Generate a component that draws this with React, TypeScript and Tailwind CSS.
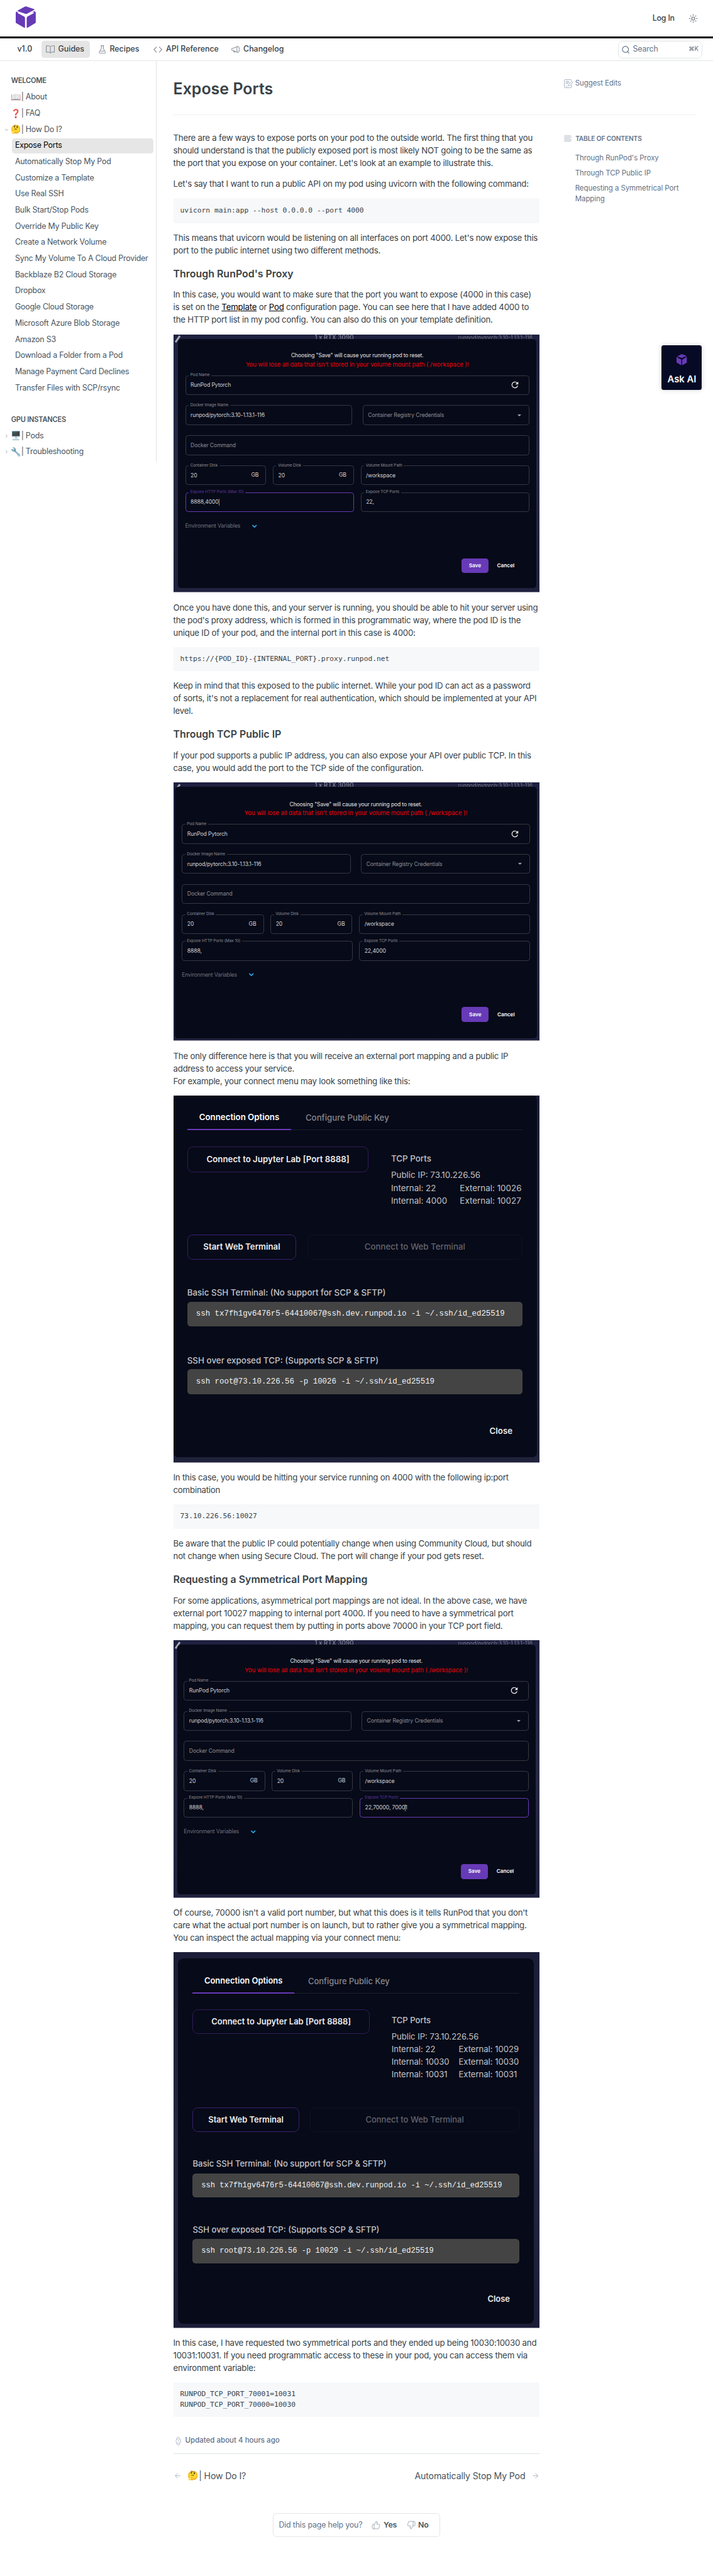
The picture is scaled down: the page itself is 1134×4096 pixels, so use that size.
import React from "react";
import { ArrowLeft, ArrowRight, ChevronDown, ChevronRight, Sun, ThumbsUp, ThumbsDown, Watch } from "lucide-react";

function Cube({ className }: { className: string }) {
  return (
    <svg className={className} viewBox="0 0 36 39" fill="currentColor">
      <path d="M17 .4c.8-.3 1.400-.3 2 0L33 5.200c1 .4 1 .9.2 1.300L21 12.900c-1.700.9-3.400.9-5.200 0L4 8.900c-1-.5-1-1 0-1.600Z" />
      <path d="M4 11c-.8-.4-.9.900 0 1.500l10.500 5.700c1.600.9 2.200 1.800 2.200 3.600V37.500c0 1.200-.6 1.500-1.600 1L1.400 30.500C.4 30 0 29.400 0 28.200V12c0-1.400 1.400-2.600 2.600-2.200Z" />
      <path d="M32.500 9.200c1.900-.600 3.500.500 3.500 2.500v16.500c0 1.200-.4 1.800-1.400 2.400l-13.200 7.800c-1 .6-1.700.3-1.700-.9V21.800c0-1.800.7-2.700 2.200-3.600l10.600-6c.9-.6.6-1.600-.4-1.400l-1.400.2c-.9-.1-.7-.7 0-1Z" />
    </svg>
  );
}

function BookIcon() {
  return (
    <svg className="h-[15px] w-[16px]" viewBox="0 0 16 15" fill="none" stroke="#7b838c" strokeWidth="1.100">
      <path d="M8 2.600C7 1.300 5.500 1 4 1H.700v11.300H5c1.600 0 2.500.6 3 1.700.5-1.100 1.400-1.700 3-1.700h4.300V1H12c-1.500 0-3 .3-4 1.600ZM8 2.600V14" />
    </svg>
  );
}
function FlaskIcon() {
  return (
    <svg className="h-[15px] w-[13px]" viewBox="0 0 13 15" fill="none" stroke="#7b838c" strokeWidth="1.100" strokeLinejoin="round">
      <path d="M3.500.700h6M4.700.700v5L.800 12.600c-.4.900 0 1.700 1 1.700h9.400c1 0 1.400-.8 1-1.700L8.300 5.700v-5M3 10.500h7" />
    </svg>
  );
}
function CodeIcon() {
  return (
    <svg className="h-[11px] w-[16px]" viewBox="0 0 16 11" fill="none" stroke="#7b838c" strokeWidth="1.200" strokeLinecap="round" strokeLinejoin="round">
      <path d="M5.300 1 1 5.500 5.300 10M10.700 1 15 5.500 10.700 10" />
    </svg>
  );
}
function MegaphoneIcon() {
  return (
    <svg className="h-[13px] w-[15px]" viewBox="0 0 15 13" fill="none" stroke="#7b838c" strokeWidth="1.100" strokeLinejoin="round">
      <path d="M11.500.800 3 4.300H1.600C1 4.300.7 4.600.7 5.200v2c0 .6.3.900.9.900H3l8.500 3.600M3.700 8.300l.8 2.700h2.200l-.5-1.700" />
      <ellipse cx="12" cy="6.200" rx="2.200" ry="5.500" />
    </svg>
  );
}
function NoteIcon() {
  return (
    <svg className="h-[16px] w-[17px]" viewBox="0 0 17 16" fill="none" stroke="#a9b3c0" strokeWidth="1.100" strokeLinejoin="round">
      <path d="M13.500 3V2c0-.8-.5-1.300-1.300-1.300H2C1.200.700.700 1.200.700 2v12c0 .8.5 1.300 1.300 1.300h10.200c.8 0 1.300-.5 1.300-1.300V9.500M3.200 3.700H9M3.200 5.700h6.500M3.200 7.700h4.500M3.200 12.700h3M8 9.500l6-5.500 1.800 1.600-5.500 5.800-2.700.6Z" />
    </svg>
  );
}
function ListIcon() {
  return (
    <svg className="h-[12px] w-[14px]" viewBox="0 0 14 12" fill="none" stroke="#a9b3c0" strokeWidth="1">
      <path d="M.5 1h12M0 3.500h14M.5 6h11M0 8.500h14M.5 11h12.500" />
    </svg>
  );
}

const guides = [
  "Automatically Stop My Pod",
  "Customize a Template",
  "Use Real SSH",
  "Bulk Start/Stop Pods",
  "Override My Public Key",
  "Create a Network Volume",
  "Sync My Volume To A Cloud Provider",
  "Backblaze B2 Cloud Storage",
  "Dropbox",
  "Google Cloud Storage",
  "Microsoft Azure Blob Storage",
  "Amazon S3",
  "Download a Folder from a Pod",
  "Manage Payment Card Declines",
  "Transfer Files with SCP/rsync",
];

function Category({ emoji, label, chevron }: { emoji: string; label: string; chevron?: "down" | "right" }) {
  return (
    <div className="flex h-[29px] items-center whitespace-nowrap">
      <span className="flex w-[20px] justify-end pr-[3px] text-[#8a94a0]">
        {chevron === "down" && <ChevronDown size={10} strokeWidth={2} />}
        {chevron === "right" && <ChevronRight size={10} strokeWidth={2} />}
      </span>
      <span className="flex w-[18px] justify-center text-[15px] leading-none">{emoji}</span>
      <span>| {label}</span>
    </div>
  );
}

function Sidebar() {
  return (
    <aside className="h-[719px] w-[281px] shrink-0 border-r border-[#e3e5e7] pt-[20.500px] text-[14px] tracking-[-0.230px] text-[#4a5560]">
      <h2 className="flex h-[29px] items-center pl-[20px] text-[12.500px] font-semibold">WELCOME</h2>
      <div className="pt-[0.500px]">
        <Category emoji="📖" label="About" />
        <Category emoji="❓" label="FAQ" />
        <Category emoji="🤔" label="How Do I?" chevron="down" />
      </div>
      <a className="mx-[5px] mt-[1px] mb-[1px] ml-[22px] flex h-[27px] items-center rounded-[5px] bg-[#e6e6e6] pl-[5px] text-black">Expose Ports</a>
      {guides.map((g) => (
        <a key={g} className="flex h-[29px] items-center pl-[27px] whitespace-nowrap">{g}</a>
      ))}
      <h2 className="mt-[28px] flex h-[29px] items-center pl-[20px] text-[12.500px] font-semibold">GPU INSTANCES</h2>
      <Category emoji="🖥️" label="Pods" chevron="right" />
      <Category emoji="🔧" label="Troubleshooting" chevron="right" />
    </aside>
  );
}

function P({ className, children }: { className: string; children: React.ReactNode }) {
  return <p className={"text-[15px] leading-[22.5px] tracking-[-0.250px] whitespace-nowrap " + className}>{children}</p>;
}
function H3({ className, children }: { className: string; children: React.ReactNode }) {
  return <h3 className={"h-[24px] text-[18px] leading-[24px] font-semibold " + className}>{children}</h3>;
}
function Code({ className, lines }: { className: string; lines: string[] }) {
  return (
    <pre className={"flex flex-col justify-center rounded-[3px] bg-[#f6f8fa] pl-[12.500px] text-[12.75px] leading-[19.1px] " + className}>
      {lines.map((l) => (
        <code key={l} className="font-['DejaVu_Sans_Mono',monospace]">{l}</code>
      ))}
    </pre>
  );
}

type FieldProps = { label?: string; value: string; suffix?: React.ReactNode; focus?: boolean; muted?: boolean; caret?: boolean; tail?: string; className?: string };
function Field({ label, value, suffix, focus, muted, caret, tail, className = "flex-1" }: FieldProps) {
  return (
    <div
      className={
        "relative flex h-[35.500px] items-center justify-between rounded-[5px] border px-[8.500px] text-[9.800px] tracking-[-0.150px] " +
        (focus ? "border-[#673ab7] " : "border-[#363843] ") +
        (muted ? "text-[#8b8c93] " : "text-[#cfd0d4] ") +
        className
      }
    >
      {label && (
        <span className={"absolute -top-[5px] left-[5px] bg-[#070a18] px-[3px] text-[7.300px] leading-[9px] tracking-[-0.100px] " + (focus ? "text-[#5b34a3]" : "text-[#8b8c93]")}>
          {label}
        </span>
      )}
      <span className="flex items-center pt-[1px] whitespace-pre">
        {value}
        {caret && <span className="-mr-px h-[12px] w-px bg-[#8f9096]" />}
        {tail}
      </span>
      {suffix}
    </div>
  );
}

type PodFormProps = { frame: string; panel: string; half: string; disk: string; http: string; tcp: string; focus: "http" | "tcp" | "none"; tcpTail?: string };
function PodForm({ frame, panel, half, disk, http, tcp, focus, tcpTail }: PodFormProps) {
  return (
    <div className={"relative w-[658px] overflow-hidden border-b border-[#8f90a0] bg-linear-to-b from-[#1e2040] via-[#272944] to-[#1f213d] font-[Inter,sans-serif] " + frame}>
      <div className="absolute top-0 left-0 h-[14px] w-full text-[#77788a] blur-[0.800px]">
        <span className="absolute top-[2px] left-[6px] h-[14px] w-[3px] rotate-35 bg-[#a9aab4]" />
        <span className="absolute top-[-1px] left-[254px] text-[11px] leading-[13px] font-semibold">1 x RTX 3090</span>
        <span className="absolute top-0 right-[13px] text-[9.500px] leading-[12px]">runpod/pytorch:3.10-1.13.1-116</span>
      </div>
      <div className={"relative rounded-[6px] bg-[#070a18] " + panel}>
        <div className="flex flex-col items-center whitespace-nowrap">
          <span className="text-[9.700px] leading-[15px] tracking-[-0.170px] text-[#e2e3e6]">Choosing "Save" will cause your running pod to reset.</span>
          <span className="text-[10.800px] leading-[15.500px] tracking-[-0.040px] text-[#f20008]">You will lose all data that isn't stored in your volume mount path ( /workspace )!</span>
        </div>
        <div className="mt-[11.500px] flex flex-col gap-[18.500px]">
          <Field
            className="w-full"
            label="Pod Name"
            value="RunPod Pytorch"
            suffix={
              <svg className="mr-[8px] h-[18px] w-[18px]" viewBox="0 0 24 24" fill="#e8e8ea">
                <path d="M17.650 6.350A7.960 7.960 0 0 0 12 4a8 8 0 1 0 7.730 10h-2.080A6 6 0 1 1 12 6c1.660 0 3.140.69 4.220 1.780L13 11h7V4z" />
              </svg>
            }
          />
          <div className="flex justify-between">
            <Field className={half} label="Docker Image Name" value="runpod/pytorch:3.10-1.13.1-116" />
            <Field
              className={half}
              muted
              value="Container Registry Credentials"
              suffix={<span className="mr-[5px] h-0 w-0 border-x-[3.500px] border-t-[4px] border-x-transparent border-t-[#a5a6ac]" />}
            />
          </div>
          <Field className="w-full" muted value="Docker Command" />
          <div className="flex gap-[12px]">
            <Field className={disk} label="Container Disk" value="20" suffix={<span className="mr-[4px]">GB</span>} />
            <Field className={disk} label="Volume Disk" value="20" suffix={<span className="mr-[4px]">GB</span>} />
            <Field label="Volume Mount Path" value="/workspace" />
          </div>
        </div>
        <div className="mt-[12.500px] flex gap-[12px]">
          <Field label="Expose HTTP Ports (Max 10)" value={http} focus={focus === "http"} caret={focus === "http"} />
          <Field label="Expose TCP Ports" value={tcp} focus={focus === "tcp"} caret={focus === "tcp"} tail={tcpTail} />
        </div>
        <div className="mt-[18px] flex h-[15px] items-center gap-[19px] text-[9.800px] tracking-[-0.210px] text-[#6d6f7a]">
          Environment Variables
          <ChevronDown size={13} strokeWidth={3.500} className="text-[#29a8e8]" />
        </div>
        <div className="mt-[50px] flex items-center justify-end pr-[27px] text-[9.300px] font-semibold text-white">
          <button className="h-[27px] w-[48.500px] rounded-[5px] bg-[#673ab7]">Save</button>
          <span className="ml-[15.500px]">Cancel</span>
        </div>
      </div>
    </div>
  );
}

function ConnectPanel({ panel, ports, sshPort }: { panel: string; ports: [string, string][]; sshPort: string }) {
  return (
    <div className={"bg-[#070a18] text-[15.150px] whitespace-nowrap text-[#c3c4c9] " + panel}>
      <div className="flex h-[63px] w-[601.500px] border-b border-[#1d202d] pt-[20px] font-medium">
        <div className="flex h-[43px] w-[187px] items-center justify-center border-b-3 border-[#673ab7] text-[15px] font-semibold text-white">Connection Options</div>
        <div className="ml-[25.500px] flex h-[43px] items-center text-[15px] text-[#85868e]">Configure Public Key</div>
      </div>
      <div className="mt-[29px] flex w-[601.500px]">
        <div className="flex h-[46px] w-[326px] shrink-0 items-center justify-center rounded-[10px] border border-[#301c5c] text-[15px] font-semibold text-[#ececee]">
          Connect to Jupyter Lab [Port 8888]
        </div>
        <div className="flex-1 pt-[9.500px] pl-[40px] leading-[23.100px]">
          <div className="font-medium">TCP Ports</div>
          <div className="mt-[7px]">Public IP: 73.10.226.56</div>
          {ports.map(([i, e]) => (
            <div key={i} className="flex justify-between">
              <span>Internal: {i}</span>
              <span className="w-[112px]">External: {e}</span>
            </div>
          ))}
        </div>
      </div>
      <div className="mt-[49px] flex h-[45px] w-[601.500px] gap-[20px] text-[15px] font-semibold">
        <div className="flex w-[196px] items-center justify-center rounded-[10px] border border-[#3a2070] text-[#ececee]">Start Web Terminal</div>
        <div className="flex flex-1 items-center justify-center rounded-[10px] border border-[#0f1220] font-medium text-[#62646e]">Connect to Web Terminal</div>
      </div>
      <div className="mt-[48px] leading-[23px] font-medium">Basic SSH Terminal: (No support for SCP &amp; SFTP)</div>
      <div className="mt-[5px] flex h-[44px] w-[601.500px] items-center rounded-[6px] bg-[#444444] pl-[16px] font-['Liberation_Mono',monospace] text-[14px] text-[#f2f2f2]">
        ssh tx7fh1gv6476r5-64410067@ssh.dev.runpod.io -i ~/.ssh/id_ed25519
      </div>
      <div className="mt-[49.500px] leading-[23px] font-medium">SSH over exposed TCP: (Supports SCP &amp; SFTP)</div>
      <div className="mt-[4px] flex h-[45px] w-[601.500px] items-center rounded-[6px] bg-[#444444] pl-[16px] font-['Liberation_Mono',monospace] text-[14px] text-[#f2f2f2]">
        ssh root@73.10.226.56 -p {sshPort} -i ~/.ssh/id_ed25519
      </div>
      <div className="mt-[54.500px] w-[584px] text-right text-[15px] leading-[23px] font-semibold text-[#ececee]">Close</div>
    </div>
  );
}

function Article() {
  return (
    <article className="w-[658px] shrink-0 text-[#384248]">
      <P className="mt-[30.500px]">
        There are a few ways to expose ports on your pod to the outside world. The first thing that you<br />
        should understand is that the publicly exposed port is most likely NOT going to be the same as<br />
        the port that you expose on your container. Let's look at an example to illustrate this.
      </P>
      <P className="mt-[15px]">Let's say that I want to run a public API on my pod using uvicorn with the following command:</P>
      <Code className="mt-[13.500px] h-[44.500px]" lines={["uvicorn main:app --host 0.0.0.0 --port 4000"]} />
      <P className="mt-[16px]">
        This means that uvicorn would be listening on all interfaces on port 4000. Let's now expose this<br />
        port to the public internet using two different methods.
      </P>
      <H3 className="mt-[18.500px]">Through RunPod's Proxy</H3>
      <P className="mt-[14.500px]">
        In this case, you would want to make sure that the port you want to expose (4000 in this case)<br />
        is set on the <a className="text-black underline">Template</a> or <a className="text-black underline">Pod</a> configuration page. You can see here that I have added 4000 to<br />
        the HTTP port list in my pod config. You can also do this on your template definition.
      </P>
      <PodForm
        frame="mt-[14px] h-[463.500px]"
        panel="mt-[8px] ml-[9px] h-[447.500px] w-[643px] px-[12.500px] pt-[23.500px]"
        half="w-[299.500px]"
        disk="w-[145.500px]"
        http="8888,4000"
        tcp="22,"
        focus="http"
      />
      <P className="mt-[16.500px]">
        Once you have done this, and your server is running, you should be able to hit your server using<br />
        the pod's proxy address, which is formed in this programmatic way, where the pod ID is the<br />
        unique ID of your pod, and the internal port in this case is 4000:
      </P>
      <Code className="mt-[13.500px] h-[44px]" lines={["https://{POD_ID}-{INTERNAL_PORT}.proxy.runpod.net"]} />
      <P className="mt-[15.500px]">
        Keep in mind that this exposed to the public internet. While your pod ID can act as a password<br />
        of sorts, it's not a replacement for real authentication, which should be implemented at your API<br />
        level.
      </P>
      <H3 className="mt-[18.500px]">Through TCP Public IP</H3>
      <P className="mt-[15px]">
        If your pod supports a public IP address, you can also expose your API over public TCP. In this<br />
        case, you would add the port to the TCP side of the configuration.
      </P>
      <PodForm
        frame="mt-[13.500px] h-[464.500px]"
        panel="mt-[8.500px] ml-[3px] h-[451px] w-[649.500px] px-[12.500px] pt-[24.500px]"
        half="w-[303px]"
        disk="w-[147.100px]"
        http="8888,"
        tcp="22,4000"
        focus="none"
      />
      <P className="mt-[16.500px]">
        The only difference here is that you will receive an external port mapping and a public IP<br />
        address to access your service.<br />
        For example, your connect menu may look something like this:
      </P>
      <div className="mt-[13.500px] h-[659.500px] w-[658px] overflow-hidden border-b border-[#8f90a0] bg-linear-to-b from-[#1b1d38] via-[#25263f] to-[#20213a] font-[Inter,sans-serif]">
        <ConnectPanel
          panel="h-[649px] w-[652.500px] rounded-[8px] pl-[25px]"
          ports={[["22", "10026"], ["4000", "10027"]]}
          sshPort="10026"
        />
      </div>
      <P className="mt-[16px]">
        In this case, you would be hitting your service running on 4000 with the following ip:port<br />
        combination
      </P>
      <Code className="mt-[13.500px] h-[44.500px]" lines={["73.10.226.56:10027"]} />
      <P className="mt-[16px]">
        Be aware that the public IP could potentially change when using Community Cloud, but should<br />
        not change when using Secure Cloud. The port will change if your pod gets reset.
      </P>
      <H3 className="mt-[18px]">Requesting a Symmetrical Port Mapping</H3>
      <P className="mt-[15px]">
        For some applications, asymmetrical port mappings are not ideal. In the above case, we have<br />
        external port 10027 mapping to internal port 4000. If you need to have a symmetrical port<br />
        mapping, you can request them by putting in ports above 70000 in your TCP port field.
      </P>
      <PodForm
        frame="mt-[14px] h-[463px]"
        panel="mt-[7.500px] ml-[7px] h-[448.500px] w-[643.500px] px-[12px] pt-[23.500px]"
        half="w-[300.500px]"
        disk="w-[145.900px]"
        http="8888,"
        tcp="22,70000, 7000"
        tcpTail="1"
        focus="tcp"
      />
      <P className="mt-[16px]">
        Of course, 70000 isn't a valid port number, but what this does is it tells RunPod that you don't<br />
        care what the actual port number is on launch, but to rather give you a symmetrical mapping.<br />
        You can inspect the actual mapping via your connect menu:
      </P>
      <div className="relative mt-[13.500px] h-[674.500px] w-[658px] overflow-hidden border-b border-[#8f90a0] bg-linear-to-b from-[#1b1d38] via-[#25263f] to-[#1b1d38] pt-[11.500px] pl-[9px] font-[Inter,sans-serif]">
        <ConnectPanel
          panel="h-[672.500px] w-[654px] rounded-[10px] pl-[26.500px] pt-[1px] [zoom:0.9754]"
          ports={[["22", "10029"], ["10030", "10030"], ["10031", "10031"]]}
          sshPort="10029"
        />
      </div>
      <P className="mt-[16px]">
        In this case, I have requested two symmetrical ports and they ended up being 10030:10030 and<br />
        10031:10031. If you need programmatic access to these in your pod, you can access them via<br />
        environment variable:
      </P>
      <Code className="mt-[14px] h-[62px]" lines={["RUNPOD_TCP_PORT_70001=10031", "RUNPOD_TCP_PORT_70000=10030"]} />
      <div className="mt-[33px] flex h-[20px] items-center text-[13px] font-medium text-[#637288]">
        <Watch size={17} strokeWidth={1.500} className="mr-[4.500px] text-[#b4bcc8]" />
        Updated about 4 hours ago
      </div>
      <hr className="mt-[13px] border-[#dfe1e4]" />
      <div className="mt-[26px] flex h-[24px] items-center text-[16px] tracking-[-0.190px] text-[#4a5560]">
        <ArrowLeft size={15} strokeWidth={1.600} className="text-[#a3adba]" />
        <span className="ml-[11px] flex w-[20px] justify-center leading-none">🤔</span>
        <span>| How Do I?</span>
        <span className="ml-auto">Automatically Stop My Pod</span>
        <ArrowRight size={15} strokeWidth={1.600} className="ml-[11px] text-[#a3adba]" />
      </div>
      <div className="mx-auto mt-[56px] flex h-[42px] w-[301px] items-center rounded-[7px] border border-[#e3e5e7] pl-[10px] text-[14px] tracking-[-0.195px] text-[#637288]">
        Did this page help you?
        <ThumbsUp size={16} strokeWidth={1.500} className="ml-[17px] text-[#98a1ad]" />
        <span className="ml-[5px] font-semibold text-[#4a5560]">Yes</span>
        <ThumbsDown size={16} strokeWidth={1.500} className="ml-[18px] text-[#98a1ad]" />
        <span className="ml-[4px] font-semibold text-[#4a5560]">No</span>
      </div>
    </article>
  );
}

export default function App() {
  return (
    <div className="relative h-[4623px] w-[1280px] overflow-hidden bg-white font-[Inter,sans-serif] text-[#384248] [zoom:0.8859375]">
      <header className="flex h-[69px] items-center border-b-4 border-black pr-[27px] pl-[28px]">
        <Cube className="mt-[-3px] h-[39px] w-[36px] text-[#673ab7]" />
        <span className="ml-auto text-[14px] font-medium tracking-[-0.200px]">Log In</span>
        <Sun size={17} strokeWidth={1.800} className="ml-[25px] text-[#6c757d]" />
      </header>
      <nav className="flex h-[41px] items-center border-b border-[#e3e5e7] pl-[31px] text-[14px] font-medium">
        <span className="w-[44px]">v1.0</span>
        <span className="flex h-[30px] w-[87px] items-center gap-[6px] rounded-[5px] bg-[#e5e5e5] pl-[7.500px]"><BookIcon />Guides</span>
        <span className="ml-[15px] flex w-[98px] items-center gap-[7px]"><FlaskIcon />Recipes</span>
        <span className="flex w-[140px] items-center gap-[7px]"><CodeIcon />API Reference</span>
        <span className="flex items-center gap-[7px]"><MegaphoneIcon />Changelog</span>
        <div className="mr-[19px] ml-auto flex h-[31.500px] w-[152px] items-center rounded-[8px] border border-[#e3e5e7] pr-[6px] pl-[6px] font-normal tracking-[-0.200px] text-[#637288]">
          <svg className="mr-[6px] h-[14px] w-[14px]" viewBox="0 0 14 14" fill="none" stroke="currentColor" strokeWidth="1.300" strokeLinecap="round">
            <circle cx="6.500" cy="6.200" r="5.500" />
            <path d="m10.500 10.500 2.800 2.800" />
          </svg>
          Search
          <span className="ml-auto text-[11px]">⌘K</span>
        </div>
      </nav>
      <div className="flex">
        <Sidebar />
        <main className="ml-[30px] w-[938px]">
          <div className="flex h-[97px] justify-between border-b-2 border-[#f0f1f2]">
            <h1 className="mt-[30px] h-[40px] text-[28.200px] leading-[40px] font-semibold">Expose Ports</h1>
            <div className="mt-[30px] flex h-[20px] w-[237px] items-center gap-[3.500px] text-[13px] tracking-[-0.100px] text-[#637288]"><NoteIcon />Suggest Edits</div>
          </div>
          <div className="flex justify-between">
            <Article />
            <div className="w-[237px] pt-[34px] text-[13px] tracking-[-0.100px] text-[#637288]">
              <div className="flex h-[16px] items-center gap-[6px] pl-[1px] text-[11.500px] font-semibold tracking-[-0.150px]"><ListIcon />TABLE OF CONTENTS</div>
              <div className="mt-[17px] flex flex-col gap-[8.500px] pl-[20.500px] leading-[19px] whitespace-nowrap">
                <a>Through RunPod's Proxy</a>
                <a>Through TCP Public IP</a>
                <a>Requesting a Symmetrical Port<br />Mapping</a>
              </div>
            </div>
          </div>
        </main>
      </div>
      <div className="absolute top-[620px] left-[1188px] flex h-[80px] w-[72px] flex-col items-center rounded-[4px] bg-[#070a24] shadow-[0_0_10px_rgba(0,0,0,0.15)]">
        <Cube className="mt-[16px] h-[20px] w-[18.500px] text-[#673ab7]" />
        <span className="mt-[13px] text-[16.700px] leading-[24px] font-semibold text-white">Ask AI</span>
      </div>
    </div>
  );
}
